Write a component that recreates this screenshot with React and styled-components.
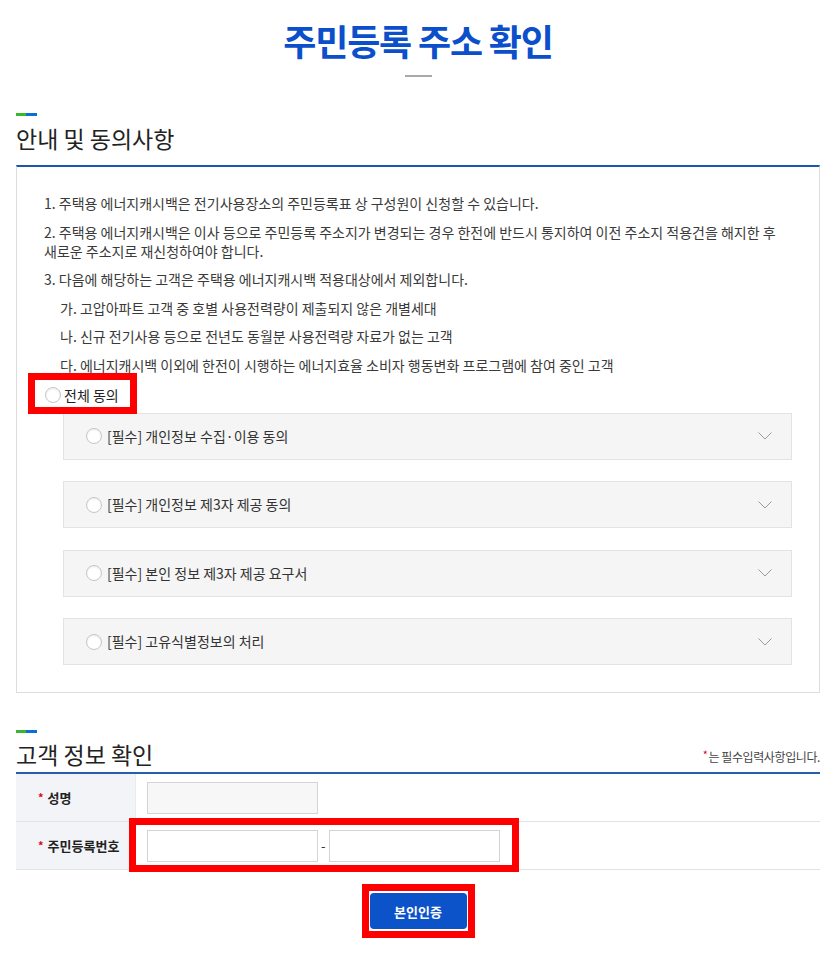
import React from 'react';
import styled, {createGlobalStyle} from 'styled-components';

const colors = {
    title: '#0b4fcb',
    line: '#1b57aa',
    button: '#0c52c9',
    text: '#3a3a3a',
    dark: '#222',
    border: '#dddddd',
    red: '#ff0000',
};

const Radio = () => <RadioCircle />;

const Chevron = () => (
    <svg width="14" height="8" viewBox="0 0 14 8">
        <polyline points="0.5,0.5 7,7 13.5,0.5" fill="none" stroke="#9a9a9a" strokeWidth="1" />
    </svg>
);

const App = () => {
    return (
        <>
            <GlobalStyle />
            <Page>
                <Title>주민등록 주소 확인</Title>
                <TitleDash />

                <Section>
                    <SectionBar />
                    <SectionTitle>안내 및 동의사항</SectionTitle>
                    <AgreeBox>
                        <NoticeList>
                            {notices.map((n, i) =>
                                <NoticeItem key={i} $sub={n.sub}>
                                    {n.lines.map((l, j) => <React.Fragment key={j}>{j > 0 && <br />}{l}</React.Fragment>)}
                                </NoticeItem>
                            )}
                        </NoticeList>
                        <AllAgreeRow>
                            <Mark $inline $t={-13} $r={-18} $b={-9} $l={-17}>
                                <AllAgreeLabel>
                                    <Radio />
                                    <span>전체 동의</span>
                                </AllAgreeLabel>
                            </Mark>
                        </AllAgreeRow>
                        <AccordionList>
                            {terms.map((t, i) =>
                                <AccordionItem key={i}>
                                    <AccordionLabel>
                                        <Radio />
                                        <span>{t}</span>
                                    </AccordionLabel>
                                    <Chevron />
                                </AccordionItem>
                            )}
                        </AccordionList>
                    </AgreeBox>
                </Section>

                <Section $gap={37}>
                    <SectionBar />
                    <HeaderRow>
                        <SectionTitle>고객 정보 확인</SectionTitle>
                        <RequiredNote><Star>*</Star>는 필수입력사항입니다.</RequiredNote>
                    </HeaderRow>
                    <FormTable>
                        <FormRow>
                            <LabelCell><Star>*</Star>성명</LabelCell>
                            <ValueCell>
                                <TextInput $disabled readOnly />
                            </ValueCell>
                        </FormRow>
                        <FormRow>
                            <LabelCell><Star>*</Star>주민등록번호</LabelCell>
                            <ValueCell>
                                <Mark $t={-12} $r={-19} $b={-10} $l={-18}>
                                    <TextInput />
                                    <Hyphen>-</Hyphen>
                                    <TextInput type="password" />
                                </Mark>
                            </ValueCell>
                        </FormRow>
                    </FormTable>
                    <ButtonRow>
                        <Mark $inline $t={-9} $r={-8} $b={-9} $l={-8}>
                            <SubmitButton type="button">본인인증</SubmitButton>
                        </Mark>
                    </ButtonRow>
                </Section>
            </Page>
        </>
    )
}
export default App;

const GlobalStyle = createGlobalStyle`
    * { box-sizing: border-box; }
    body {
        margin: 0;
        background: #fff;
        font-family: 'Noto Sans CJK KR', 'Noto Sans', sans-serif;
        color: ${colors.text};
    }
`;
const Page = styled.div`
    width: 839px;
    padding: 18px 19px 40px 16px;
`;
const Title = styled.h1`
    margin: 0;
    color: ${colors.title};
    font-size: 36px;
    font-weight: 700;
    letter-spacing: -1.2px;
    line-height: 44px;
    text-align: center;
`;
const TitleDash = styled.div`
    background: #a9a9a9;
    height: 2px;
    margin: 13px auto 0;
    width: 27px;
`;
const Section = styled.section`
    margin-top: ${p => p.$gap || 36}px;
`;
const SectionBar = styled.div`
    background: linear-gradient(to right, #3cb62a 50%, #0b6fd6 50%);
    height: 3px;
    width: 21px;
`;
const SectionTitle = styled.h2`
    margin: 7px 0 0;
    color: ${colors.dark};
    font-size: 23px;
    font-weight: 400;
    letter-spacing: 0;
    line-height: 30px;
`;
const AgreeBox = styled.div`
    border: 1px solid ${colors.border};
    border-top: 2px solid ${colors.line};
    margin-top: 12px;
    padding: 27px 27px 27px;
`;
const NoticeList = styled.div`
    display: flex;
    flex-direction: column;
    gap: 9.5px;
`;
const NoticeItem = styled.p`
    margin: 0;
    color: ${colors.text};
    font-size: 14px;
    line-height: 19px;
    padding-left: ${p => p.$sub ? 16 : 0}px;
    white-space: nowrap;
`;
const Mark = styled.div`
    position: relative;
    display: ${p => p.$inline ? 'inline-flex' : 'flex'};
    align-items: center;
    &::after {
        content: '';
        position: absolute;
        top: ${p => p.$t}px;
        right: ${p => p.$r}px;
        bottom: ${p => p.$b}px;
        left: ${p => p.$l}px;
        border: 7px solid ${colors.red};
        pointer-events: none;
    }
`;
const AllAgreeRow = styled.div`
    display: flex;
    margin-top: 11px;
    padding-left: 1px;
`;
const AllAgreeLabel = styled.label`
    align-items: center;
    display: flex;
    gap: 3px;
    color: ${colors.dark};
    font-size: 14px;
    line-height: 19px;
`;
const RadioCircle = styled.span`
    background: #fff;
    border: 1px solid #c6c6c6;
    border-radius: 50%;
    box-shadow: inset 0 1px 2px rgba(0, 0, 0, 0.08);
    display: inline-block;
    flex: none;
    height: 16px;
    width: 16px;
`;
const AccordionList = styled.div`
    display: flex;
    flex-direction: column;
    gap: 21.5px;
    margin: 8px 0 0 19px;
`;
const AccordionItem = styled.div`
    align-items: center;
    background: #f5f5f5;
    border: 1px solid #e3e3e3;
    display: flex;
    height: 47px;
    justify-content: space-between;
    padding: 0 19px 0 22px;
`;
const AccordionLabel = styled.label`
    align-items: center;
    display: flex;
    gap: 5px;
    color: #333;
    font-size: 14px;
    line-height: 19px;
`;
const HeaderRow = styled.div`
    align-items: flex-end;
    display: flex;
    justify-content: space-between;
    margin-top: 6px;
    h2 { margin-top: 0; }
`;
const RequiredNote = styled.span`
    color: #444;
    font-size: 12px;
    letter-spacing: -0.4px;
    line-height: 16px;
    padding-bottom: 4px;
`;
const Star = styled.span`
    color: #e60012;
    font-size: 11px;
    margin-right: 4px;
    position: relative;
    top: -1px;
    ${RequiredNote} & {
        margin-right: 1px;
        top: -3px;
    }
`;
const FormTable = styled.div`
    border-top: 2px solid #2360aa;
    margin-top: 3px;
`;
const FormRow = styled.div`
    border-bottom: 1px solid #e3e3e3;
    display: grid;
    grid-template-columns: 120px 1fr;
    height: 48px;
`;
const LabelCell = styled.div`
    align-items: center;
    background: #f2f4f7;
    border-right: 1px solid #e8eaee;
    color: ${colors.dark};
    display: flex;
    font-size: 13px;
    font-weight: 700;
    padding-left: 22px;
`;
const ValueCell = styled.div`
    align-items: center;
    display: flex;
    padding-left: 11px;
`;
const TextInput = styled.input`
    background: ${p => p.$disabled ? '#f7f7f7' : '#fff'};
    border: 1px solid #d4d4d4;
    height: 32px;
    outline: none;
    width: 171px;
`;
const Hyphen = styled.span`
    color: #333;
    font-size: 13px;
    margin: 0 3px;
`;
const ButtonRow = styled.div`
    display: flex;
    justify-content: center;
    margin-top: 23px;
`;
const SubmitButton = styled.button`
    background: ${colors.button};
    border: none;
    border-radius: 4px;
    color: #fff;
    cursor: pointer;
    font-family: 'Noto Sans CJK KR', sans-serif;
    font-size: 13px;
    font-weight: 700;
    height: 36px;
    width: 97px;
`;

export const notices = [
    {lines: ['1. 주택용 에너지캐시백은 전기사용장소의 주민등록표 상 구성원이 신청할 수 있습니다.']},
    {lines: ['2. 주택용 에너지캐시백은 이사 등으로 주민등록 주소지가 변경되는 경우 한전에 반드시 통지하여 이전 주소지 적용건을 해지한 후', '새로운 주소지로 재신청하여야 합니다.']},
    {lines: ['3. 다음에 해당하는 고객은 주택용 에너지캐시백 적용대상에서 제외합니다.']},
    {sub: true, lines: ['가. 고압아파트 고객 중 호별 사용전력량이 제출되지 않은 개별세대']},
    {sub: true, lines: ['나. 신규 전기사용 등으로 전년도 동월분 사용전력량 자료가 없는 고객']},
    {sub: true, lines: ['다. 에너지캐시백 이외에 한전이 시행하는 에너지효율 소비자 행동변화 프로그램에 참여 중인 고객']},
];

export const terms = [
    '[필수] 개인정보 수집·이용 동의',
    '[필수] 개인정보 제3자 제공 동의',
    '[필수] 본인 정보 제3자 제공 요구서',
    '[필수] 고유식별정보의 처리',
];
